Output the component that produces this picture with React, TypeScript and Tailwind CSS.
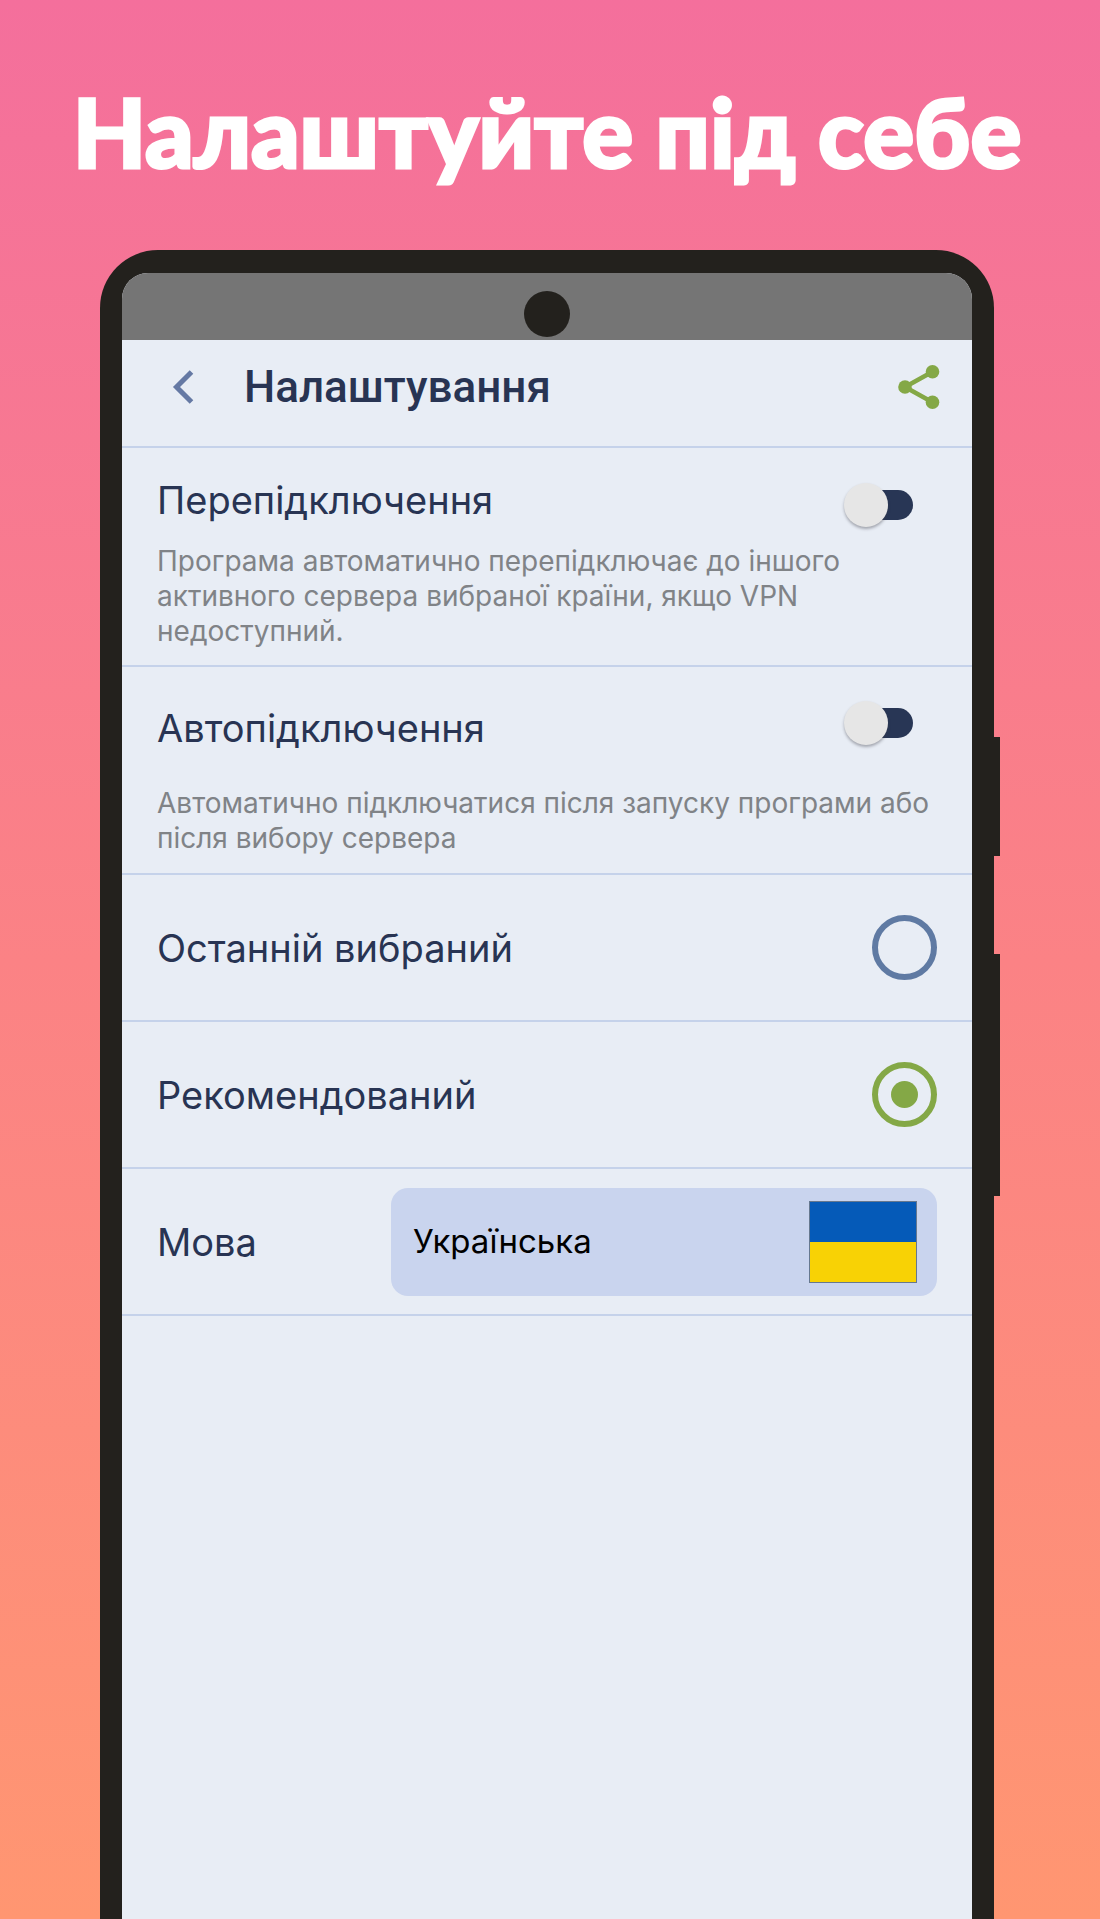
import { useState } from "react";

type Mode = "last" | "recommended";

const label = "text-[38px] leading-10 text-[#283453]";
const hint = "text-[28px] leading-[35px] text-[#808387]";

function Toggle({ id }: { id: string }) {
  return (
    <input
      id={id}
      type="checkbox"
      role="switch"
      className="relative h-[30px] w-[60px] shrink-0 appearance-none rounded-full bg-[#283655] before:absolute before:-left-[9px] before:-top-[7px] before:size-11 before:rounded-full before:bg-[#e6e6e6] before:shadow-[0_2px_3px_rgba(60,60,70,0.4)] before:transition-transform checked:before:translate-x-[34px]"
    />
  );
}

function RadioRow({
  id,
  text,
  checked,
  onSelect,
}: {
  id: string;
  text: string;
  checked: boolean;
  onSelect: () => void;
}) {
  return (
    <div className="flex h-[147px] items-center justify-between border-b-2 border-[#c5d2ea] px-[35px]">
      <label htmlFor={id} className={label}>
        {text}
      </label>
      <input
        id={id}
        type="radio"
        name="mode"
        checked={checked}
        onChange={onSelect}
        className="grid size-[65px] appearance-none place-items-center rounded-full border-[6px] border-[#5f7aa3] checked:border-[#84a846] checked:before:block checked:before:size-[27px] checked:before:rounded-full checked:before:bg-[#84a846]"
      />
    </div>
  );
}

export default function App() {
  const [mode, setMode] = useState<Mode>("recommended");

  return (
    <div className="flex min-h-screen flex-col overflow-hidden bg-linear-to-b from-[#f46f9c] via-[#fb8285] to-[#ff9671] pl-[100px] pr-[106px] font-['Inter',sans-serif]">
      <h1 className="-mx-12 flex h-[250px] items-center justify-center whitespace-nowrap pt-3 font-['Lato','Open_Sans',sans-serif] text-[95px] font-black leading-[100px] text-white [-webkit-text-stroke:3px_white]">
        Налаштуйте під себе
      </h1>

      <div className="relative flex flex-1 flex-col rounded-t-[58px] bg-[#23211d] px-[22px] pt-[23px]">
        <span className="absolute -right-[6px] top-[487px] h-[119px] w-[6px] bg-[#23211d]" />
        <span className="absolute -right-[6px] top-[704px] h-[242px] w-[6px] bg-[#23211d]" />

        <div className="flex flex-1 flex-col overflow-hidden rounded-t-[26px] bg-[#e8edf5]">
          <div className="flex h-[67px] justify-center bg-[#757575] pt-[18px]">
            <span className="size-[46px] rounded-full bg-[#23211d]" />
          </div>

          <header className="flex h-[108px] items-center border-b-2 border-[#c5d2ea] pb-3 pl-[50px] pr-8">
            <button type="button" aria-label="Назад">
              <svg viewBox="0 0 22 34" className="h-[34px] w-[22px]" fill="none" stroke="#6579a4" strokeWidth="5">
                <path d="M19.5 2 4.500 17l15 15" />
              </svg>
            </button>
            <h2 className="ml-[50px] font-['Roboto',sans-serif] text-[44px] font-medium leading-[52px] text-[#283453]">
              Налаштування
            </h2>
            <button type="button" aria-label="Поділитися" className="ml-auto">
              <svg viewBox="0 0 42 44" className="h-[44px] w-[42px]" fill="#84a846" stroke="#84a846">
                <path d="M34.500 6.800 7 22l27.500 15.200" fill="none" strokeWidth="4.500" />
                <circle cx="34.500" cy="6.800" r="6.800" stroke="none" />
                <circle cx="7" cy="22" r="6.800" stroke="none" />
                <circle cx="34.500" cy="37.200" r="6.800" stroke="none" />
              </svg>
            </button>
          </header>

          <section className="h-[219px] border-b-2 border-[#c5d2ea] pl-[35px] pt-8">
            <div className="flex items-end justify-between pr-[59px]">
              <label htmlFor="reconnect" className={label}>
                Перепідключення
              </label>
              <Toggle id="reconnect" />
            </div>
            <p className={`${hint} mt-6 max-w-[720px]`}>
              Програма автоматично перепідключає до іншого активного сервера вибраної країни, якщо VPN недоступний.
            </p>
          </section>

          <section className="h-[208px] border-b-2 border-[#c5d2ea] pl-[35px] pt-[41px]">
            <div className="flex items-start justify-between pr-[59px]">
              <label htmlFor="autoconnect" className={label}>
                Автопідключення
              </label>
              <Toggle id="autoconnect" />
            </div>
            <p className={`${hint} mt-[38px] pr-10`}>
              Автоматично підключатися після запуску програми або після вибору сервера
            </p>
          </section>

          <RadioRow id="last" text="Останній вибраний" checked={mode === "last"} onSelect={() => setMode("last")} />
          <RadioRow
            id="recommended"
            text="Рекомендований"
            checked={mode === "recommended"}
            onSelect={() => setMode("recommended")}
          />

          <div className="flex h-[147px] items-center justify-between border-b-2 border-[#c5d2ea] px-[35px]">
            <label htmlFor="language" className={label}>
              Мова
            </label>
            <div className="relative w-[546px]">
              <select
                id="language"
                className="h-[108px] w-full appearance-none rounded-[17px] bg-[#c9d4ee] px-[22px] text-[33px] text-black"
              >
                <option>Українська</option>
              </select>
              <span
                aria-hidden="true"
                className="pointer-events-none absolute right-5 top-[13px] flex h-[82px] w-[108px] flex-col border border-[#66788f] bg-[#f8d205]"
              >
                <span className="h-1/2 w-full bg-[#055ab8]" />
              </span>
            </div>
          </div>
        </div>
      </div>
    </div>
  );
}
